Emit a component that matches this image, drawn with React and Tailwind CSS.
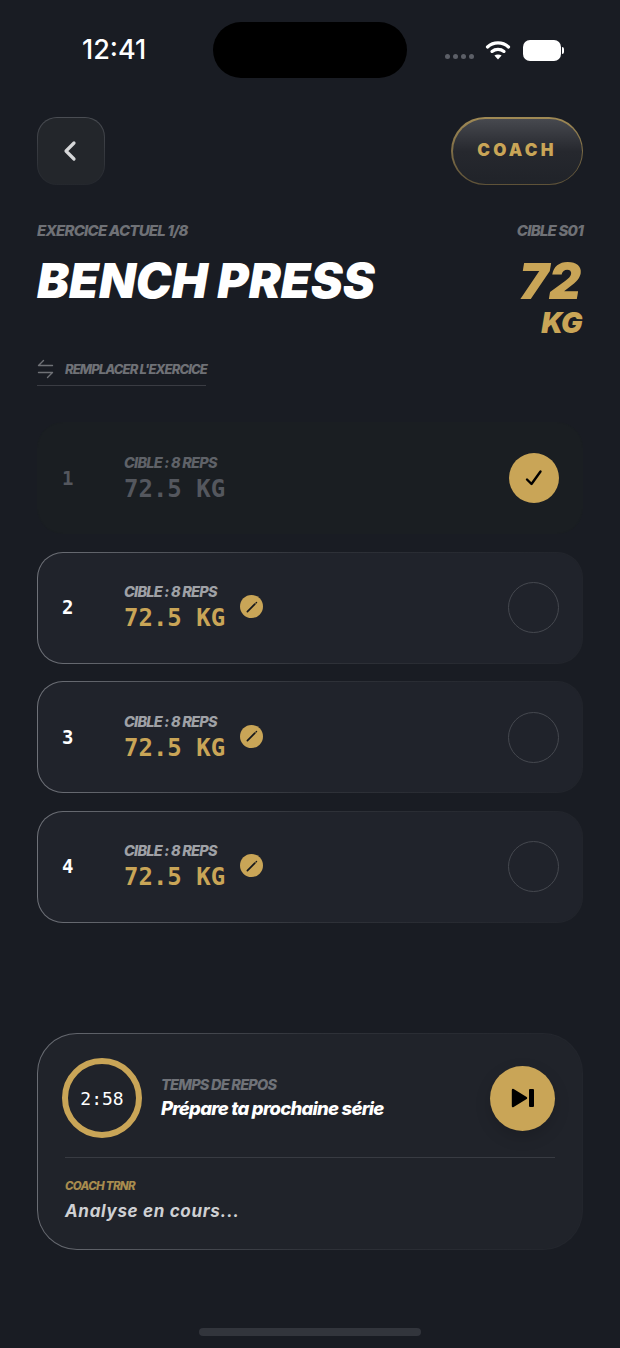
import { ChevronLeft } from "lucide-react";

const inter = "font-['Inter',sans-serif]";
const mono = "font-['DejaVu_Sans_Mono',monospace]";

function WifiIcon() {
  return (
    <svg width="26" height="20" viewBox="0 0 26 20" fill="none" stroke="white" strokeWidth="3.2" strokeLinecap="round">
      <path d="M2.5 7 C8.5 1.6, 17.5 1.6, 23.5 7" />
      <path d="M7 11.4 C10.4 8.6, 15.6 8.6, 19 11.4" />
      <path d="M13 19.6 L9.4 15.6 C11.4 14, 14.6 14, 16.6 15.6 Z" fill="white" stroke="none" />
    </svg>
  );
}

function StatusBar() {
  return (
    <div className="relative h-[117px] shrink-0">
      <div className="absolute left-[213px] top-[22px] h-[56px] w-[194px] rounded-[28px] bg-black" />
      <div className={`absolute left-[82px] top-[35px] text-[27px] leading-[30px] font-medium text-white ${inter}`}>12:41</div>
      <div className="absolute left-[445px] top-[40px] flex items-start">
        <div className="mt-[14px] flex gap-[3px]">
          {[1, 2, 3, 4].map((i) => (
            <div key={i} className="h-[5px] w-[5px] rounded-full bg-[#5c5f67]" />
          ))}
        </div>
        <div className="ml-[11px]">
          <WifiIcon />
        </div>
        <div className="ml-[12px] h-[21px] w-[38px] rounded-[7px] bg-white" />
        <div className="ml-[1px] mt-[7px] h-[7px] w-[2px] rounded-r-full bg-white" />
      </div>
    </div>
  );
}

function TopButtons() {
  return (
    <div className="flex items-center justify-between">
      <div className="rounded-[20px] bg-gradient-to-b from-[#4a4d53] to-[#24272d] p-px">
        <div className="flex h-[66px] w-[66px] items-center justify-center rounded-[19px] bg-[#23262b]">
          <ChevronLeft className="h-[32px] w-[32px] text-[#d6d7d9] -ml-[2px]" strokeWidth={2.4} />
        </div>
      </div>
      <div className="rounded-[34px] bg-gradient-to-b from-[#a08a55] to-[#5e5238] p-[1.5px]">
        <div className={`flex h-[65px] w-[129px] items-center justify-center rounded-[33px] bg-gradient-to-b from-[#47494f] via-[#26282e] to-[#202329] text-[17px] font-black tracking-[0.19em] text-[#c9a557] ${inter}`}>
          COACH
        </div>
      </div>
    </div>
  );
}

function SwapIcon() {
  return (
    <svg width="17" height="20" viewBox="0 0 17 20" fill="none" stroke="#6f7176" strokeWidth="1.4" strokeLinecap="round" strokeLinejoin="round" className="shrink-0">
      <path d="M15.5 6.5 H1.5 L6.5 1.5" />
      <path d="M1.5 13.5 H15.5 L10.5 18.5" />
    </svg>
  );
}

function Header() {
  return (
    <div className={`mt-[37px] ${inter}`}>
      <div className="flex items-start justify-between">
        <div className="min-w-0">
          <div className="text-[15px] leading-[17px] font-extrabold italic tracking-[-0.053em] text-[#6f7176]">EXERCICE ACTUEL 1/8</div>
          <div className="mt-[19px] text-[48px] leading-[46px] font-black italic text-white whitespace-nowrap">BENCH PRESS</div>
        </div>
        <div className="flex flex-col items-end">
          <div className="text-[15px] leading-[17px] font-extrabold italic tracking-[-0.053em] text-[#6f7176]">CIBLE S01</div>
          <div className="mt-[19px] text-[50px] leading-[46px] font-black italic pr-[2px] text-[#c9a557]">72</div>
          <div className="mt-[4px] text-[28.5px] leading-[30px] font-black italic tracking-[-0.02em] pr-[1px] text-[#c9a557]">KG</div>
        </div>
      </div>
      <div className="mt-[21px] flex w-[169px] items-center gap-[11px] border-b border-[#3a3c43] pb-[6px]">
        <SwapIcon />
        <span className="text-[13px] leading-[20px] font-extrabold italic tracking-[-0.068em] text-[#6f7176] whitespace-nowrap">REMPLACER L'EXERCICE</span>
      </div>
    </div>
  );
}

function PencilBadge() {
  return (
    <div className="mb-[2px] flex h-[23px] w-[23px] items-center justify-center rounded-full bg-[#c9a557]">
      <svg width="14" height="14" viewBox="0 0 14 14" fill="none" stroke="#17191d" strokeLinecap="round">
        <path d="M2.4 11.6 L9.8 4.2" strokeWidth="1.7" />
        <path d="M11 3 L11.6 2.4" strokeWidth="1.3" />
      </svg>
    </div>
  );
}

function SetRow({ num, done }) {
  return (
    <div className={done ? "rounded-[26px] bg-[#1a1e22] p-px" : "rounded-[26px] bg-gradient-to-r from-[#6e7178] via-[#2f3239] to-[#21242b] p-px"}>
      <div className={`flex h-[110px] items-center rounded-[25px] pr-[23.5px] ${done ? "bg-[#1a1e22]" : "bg-[#20232b]"} ${inter}`}>
        <div className={`w-[86px] pl-[24px] text-[19px] font-bold ${mono} ${done ? "text-[#54575e]" : "text-white"}`}>{num}</div>
        <div className="flex flex-1 items-center gap-[15px]">
          <div className="pt-[2px]">
            <div className={`text-[14.5px] leading-[16px] font-extrabold italic tracking-[-0.053em] ${done ? "text-[#5f6268]" : "text-[#9fa1a6]"}`}>CIBLE : 8 REPS</div>
            <div className={`mt-[4px] text-[24px] leading-[29px] font-bold whitespace-nowrap ${mono} ${done ? "text-[#54575e]" : "text-[#c9a557]"}`}>72.5 KG</div>
          </div>
          {!done && <PencilBadge />}
        </div>
        {done ? (
          <div className="flex h-[50px] w-[50px] items-center justify-center rounded-full bg-[#c9a557]">
            <svg width="18" height="18" viewBox="0 0 18 18" fill="none" stroke="black" strokeWidth="2.4" strokeLinecap="round" strokeLinejoin="round">
              <path d="M2 10.5 L6.5 15 L15.5 2.5" />
            </svg>
          </div>
        ) : (
          <div className="h-[51px] w-[51px] rounded-full border-[1.5px] border-[#45484f]" />
        )}
      </div>
    </div>
  );
}

function RestCard() {
  return (
    <div className="mt-[110px] rounded-[40px] bg-gradient-to-r from-[#6a6d74] via-[#2f3239] to-[#22252c] p-px">
      <div className={`h-[215px] rounded-[39px] bg-[#20232a] px-[24px] pt-[24.5px] ${inter}`}>
        <div className="flex items-center justify-between">
          <div className="flex items-center gap-[19px]">
            <div className={`flex h-[80px] w-[80px] items-center justify-center rounded-full border-[6px] border-[#c9a557] text-[18px] text-white ${mono}`}>2:58</div>
            <div>
              <div className="text-[14.5px] leading-[17px] font-extrabold italic tracking-[-0.053em] text-[#6f7278]">TEMPS DE REPOS</div>
              <div className="mt-[3px] text-[18.5px] leading-[24px] font-extrabold italic tracking-[-0.04em] text-white whitespace-nowrap">Prépare ta prochaine série</div>
            </div>
          </div>
          <div className="mr-[3px] flex h-[65px] w-[65px] items-center justify-center rounded-full bg-[#c9a557] shadow-[0_6px_16px_rgba(0,0,0,0.15)]">
            <svg width="24" height="20" viewBox="0 0 24 20" fill="black" stroke="black" strokeLinejoin="round">
              <path d="M2 2 L15 10 L2 18 Z" strokeWidth="2.4" />
              <rect x="18" y="1" width="5" height="18" rx="1" stroke="none" />
            </svg>
          </div>
        </div>
        <div className="ml-[3px] mr-[3px] mt-[19px] border-t border-[#383b42] pt-[20px]">
          <div className="text-[11.5px] leading-[16px] font-extrabold italic tracking-[-0.06em] text-[#a88c4e]">COACH TRNR</div>
          <div className="mt-[5px] text-[17px] leading-[24px] font-bold italic tracking-[0.04em] text-[#cfd0d3]">Analyse en cours...</div>
        </div>
      </div>
    </div>
  );
}

export default function App() {
  return (
    <div className="relative flex h-[1348px] w-[620px] flex-col overflow-hidden bg-[#191c23]">
      <StatusBar />
      <div className="px-[37px]">
        <TopButtons />
        <Header />
        <div className="mt-[36px] flex flex-col gap-[17.5px]">
          <SetRow num="1" done />
          <SetRow num="2" />
          <SetRow num="3" />
          <SetRow num="4" />
        </div>
        <RestCard />
      </div>
      <div className="mt-auto mb-[12px] h-[8px] w-[222px] self-center rounded-full bg-[#32353c]" />
    </div>
  );
}
